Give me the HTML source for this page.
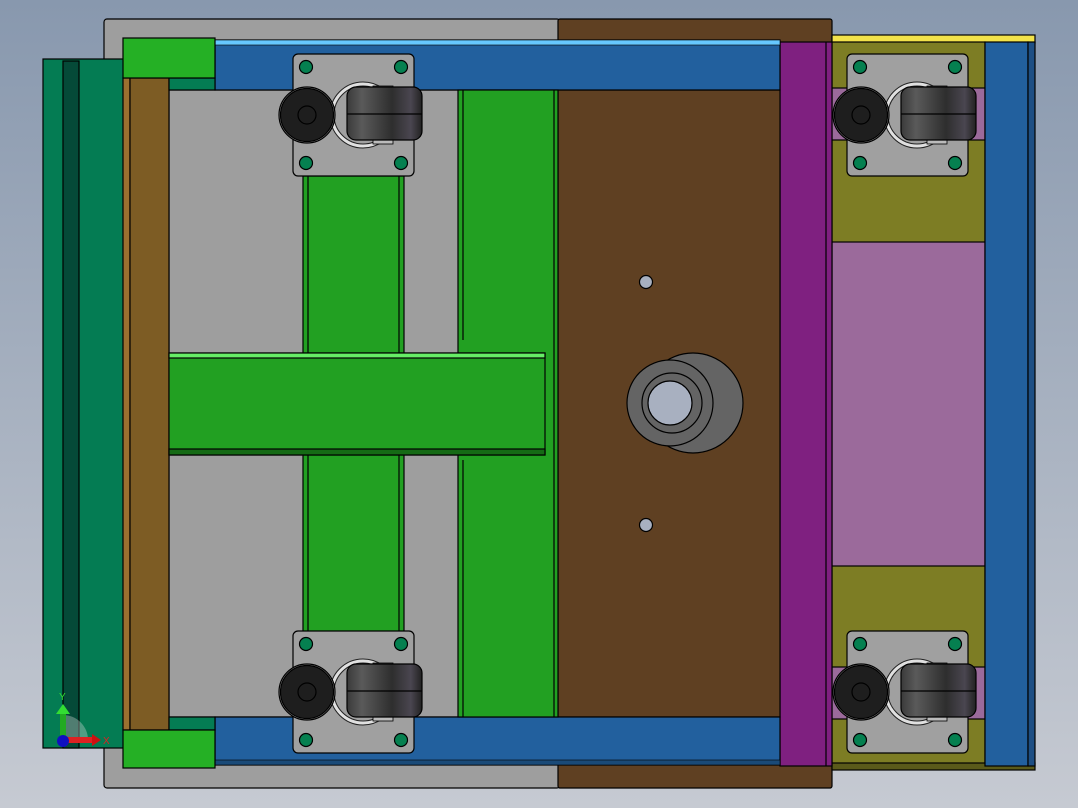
<!DOCTYPE html>
<html><head><meta charset="utf-8"><style>html,body{margin:0;padding:0;overflow:hidden}body{width:1078px;height:808px}</style></head><body>
<svg width="1078" height="808" viewBox="0 0 1078 808" xmlns="http://www.w3.org/2000/svg" stroke="#000" stroke-width="1.2">
<defs>
<linearGradient id="bg" x1="0" y1="0" x2="0" y2="1"><stop offset="0" stop-color="#8898ae"/><stop offset="1" stop-color="#c6cad2"/></linearGradient>
<linearGradient id="roll" x1="0" y1="0" x2="1" y2="0"><stop offset="0" stop-color="#3a3a3a"/><stop offset="0.2" stop-color="#5a5a5a"/><stop offset="0.6" stop-color="#2e2e2e"/><stop offset="0.85" stop-color="#4a4650"/><stop offset="1" stop-color="#222"/></linearGradient>
<g id="caster">
<rect x="0" y="0" width="121" height="122" rx="5" fill="#a0a0a0"/>
<circle cx="13" cy="13" r="6.5" fill="#058050"/><circle cx="108" cy="13" r="6.5" fill="#058050"/>
<circle cx="13" cy="109" r="6.5" fill="#058050"/><circle cx="108" cy="109" r="6.5" fill="#058050"/>
<circle cx="70" cy="61" r="31" fill="none" stroke="#222" stroke-width="5"/>
<circle cx="70" cy="61" r="31" fill="none" stroke="#e0e0e0" stroke-width="3"/>
<rect x="80" y="32" width="20" height="58" fill="#bbb" stroke-width="0.8"/>
<circle cx="14" cy="61" r="28" fill="#a0a0a0"/>
<circle cx="14" cy="61" r="26.5" fill="#1e1e1e"/>
<circle cx="14" cy="61" r="9" fill="none"/>
<rect x="54" y="33" width="75" height="53" rx="9" fill="url(#roll)"/>
<line x1="54" y1="60" x2="129" y2="60"/>
</g>
</defs>
<rect width="1078" height="808" fill="url(#bg)" stroke="none"/>
<rect x="104" y="19" width="456" height="769" rx="3" fill="#9e9e9e"/>
<rect x="558" y="19" width="274" height="769" rx="2" fill="#5f4022"/>
<rect x="43" y="59" width="82" height="689" fill="#047c53"/>
<rect x="63" y="61" width="16" height="687" fill="#054a38"/>
<rect x="832" y="35" width="203" height="8" fill="#f2e24a"/>
<rect x="832" y="42" width="153" height="724" fill="#7d7d24"/>
<rect x="832" y="242" width="153" height="324" fill="#9b6a9b"/>
<rect x="832" y="88" width="153" height="52" fill="#9b6a9b"/>
<rect x="832" y="667" width="153" height="52" fill="#9b6a9b"/>
<rect x="832" y="763" width="203" height="7" fill="#5a5a1a"/>
<rect x="985" y="42" width="43" height="724" fill="#22609e"/>
<rect x="1028" y="42" width="7" height="724" fill="#1e4f84"/>
<rect x="780" y="42" width="52" height="724" fill="#7f2080"/>
<line x1="826" y1="42" x2="826" y2="766"/>
<rect x="169" y="90" width="389" height="627" fill="#9e9e9e"/>
<rect x="558" y="90" width="222" height="627" fill="#5f4022"/>
<rect x="215" y="40" width="565" height="50" fill="#22609e"/>
<rect x="215" y="40" width="565" height="5" fill="#66c8ff" stroke-width="0.6"/>
<rect x="215" y="717" width="565" height="48" fill="#22609e"/>
<rect x="215" y="760" width="565" height="5" fill="#1a4a78" stroke-width="0.6"/>
<rect x="123" y="78" width="7" height="652" fill="#9a7030"/>
<rect x="130" y="78" width="39" height="652" fill="#7d5c24"/>
<rect x="169" y="78" width="46" height="12" fill="#047c53"/>
<rect x="169" y="717" width="46" height="13" fill="#047c53"/>
<rect x="123" y="38" width="92" height="40" fill="#25b025"/>
<rect x="123" y="730" width="92" height="38" fill="#25b025"/>
<rect x="458" y="90" width="100" height="627" fill="#22a022"/>
<line x1="463" y1="90" x2="463" y2="340"/><line x1="463" y1="460" x2="463" y2="717"/>
<line x1="554" y1="90" x2="554" y2="717"/>
<rect x="303" y="176" width="101" height="456" fill="#22a022"/>
<line x1="308" y1="176" x2="308" y2="632"/><line x1="399" y1="176" x2="399" y2="632"/>
<rect x="169" y="353" width="376" height="102" fill="#22a022"/>
<rect x="169" y="353" width="376" height="5" fill="#66ee66"/>
<rect x="169" y="449" width="376" height="6" fill="#156a15"/>
<circle cx="693" cy="403" r="50" fill="#646464"/>
<circle cx="670" cy="403" r="43" fill="#646464"/>
<circle cx="672" cy="403" r="30" fill="#646464"/>
<circle cx="670" cy="403" r="22" fill="#a8b0c0"/>
<circle cx="646" cy="282" r="6.5" fill="#a8b0c0"/>
<circle cx="646" cy="525" r="6.5" fill="#a8b0c0"/>
<use href="#caster" x="293" y="54"/>
<use href="#caster" x="847" y="54"/>
<use href="#caster" x="293" y="631"/>
<use href="#caster" x="847" y="631"/>
<g stroke="none">
<path d="M63 740 L63 715 A25 25 0 0 1 88 740Z" fill="#ddd" opacity="0.35"/>
<rect x="60" y="713" width="6" height="24" fill="#22aa22"/>
<path d="M56 714 L63 704 L70 714Z" fill="#33dd33"/>
<rect x="66" y="737" width="27" height="6" fill="#dd2222"/>
<path d="M92 734 L101 740 L92 746Z" fill="#cc1111"/>
<circle cx="63" cy="741" r="6" fill="#1010c0"/>
<text x="59" y="700" font-family="Liberation Sans, sans-serif" font-size="10" fill="#33dd33">Y</text>
<text x="103" y="744" font-family="Liberation Sans, sans-serif" font-size="10" fill="#dd2222">X</text>
</g>
</svg>
</body></html>
